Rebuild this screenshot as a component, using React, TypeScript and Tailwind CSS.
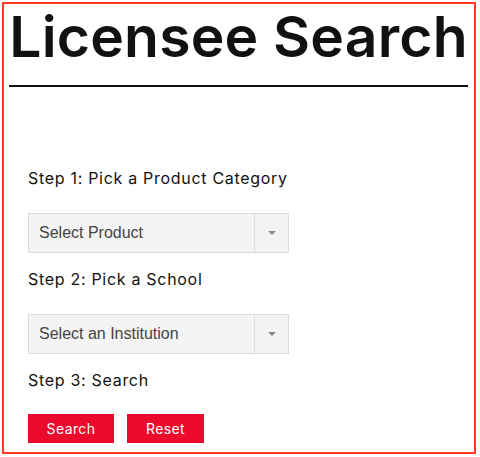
import { useState } from "react";

function SelectBox({ label }: { label: string }) {
  return (
    <div className="flex h-[40px] w-[261px] border border-[#dcdcdc] bg-[#f4f4f4]">
      <div className="flex flex-1 items-center pl-[10px] text-[16px] text-[#444] [font-family:'Liberation_Sans',Arial,sans-serif]">
        {label}
      </div>
      <div className="flex w-[34px] items-center justify-center border-l border-[#dcdcdc]">
        <svg width="8" height="4" viewBox="0 0 8 4">
          <path d="M0 0h8L4 4z" fill="#888" />
        </svg>
      </div>
    </div>
  );
}

export default function App() {
  const [product] = useState("Select Product");
  const [school] = useState("Select an Institution");

  return (
    <div className="m-[2px] h-[452px] w-[474px] border-2 border-[#ff3b1f] bg-white [font-family:Inter,'Open_Sans',sans-serif] text-[#111]">
      {/* header */}
      <div className="pl-[5px] pr-[6px]">
        <h1 className="mt-[4px] whitespace-nowrap text-center text-[57px] font-semibold leading-[58px] tracking-[0.2px] text-[#111]">
          Licensee Search
        </h1>
        <div className="mt-[19px] h-[2px] bg-[#111]" />
      </div>

      {/* steps */}
      <div className="flex flex-col px-[24px] pt-[81px]">
        <p className="text-[16px] leading-[20px] tracking-[0.7px]">Step 1: Pick a Product Category</p>
        <div className="mt-[25px]">
          <SelectBox label={product} />
        </div>
        <p className="mt-[16px] text-[16px] leading-[20px] tracking-[0.7px]">Step 2: Pick a School</p>
        <div className="mt-[25px]">
          <SelectBox label={school} />
        </div>
        <p className="mt-[16px] text-[16px] leading-[20px] tracking-[0.7px]">Step 3: Search</p>
        <div className="mt-[24px] flex gap-[13px]">
          <button className="h-[29px] w-[86px] bg-[#ec0a2c] text-[14px] tracking-[0.4px] text-white">Search</button>
          <button className="h-[29px] w-[77px] bg-[#ec0a2c] text-[14px] tracking-[0.4px] text-white">Reset</button>
        </div>
      </div>
    </div>
  );
}
